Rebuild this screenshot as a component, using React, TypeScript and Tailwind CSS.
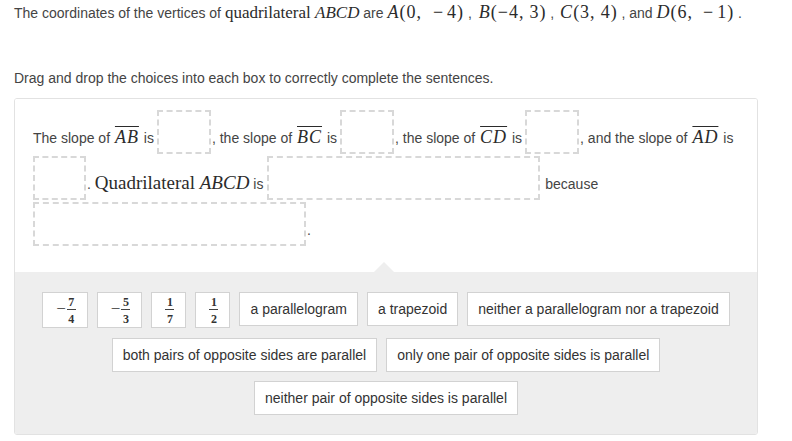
import React from "react";

const sans = "font-['Liberation_Sans',Arial,sans-serif]";

function M({ children, cls = "text-[17px]" }: { children: React.ReactNode; cls?: string }) {
  return (
    <span className={`font-['Liberation_Serif','Times_New_Roman',serif] leading-none text-[#2b2b2b] ${cls}`}>
      {children}
    </span>
  );
}

function Sp({ w }: { w: string }) {
  return <span className={`inline-block ${w}`} />;
}

function Seg({ children }: { children: React.ReactNode }) {
  return <span className="overline decoration-1 italic px-[1px] tracking-[1px]">{children}</span>;
}

function T({ children }: { children: React.ReactNode }) {
  return <span className="whitespace-pre leading-[20px] pb-[6px] text-[14px] text-[#444]">{children}</span>;
}

function Box({ w }: { w: string }) {
  return <span className={`${w} inline-block h-[44px] shrink-0 border-2 border-dashed border-[#d8d8d8] ml-[3px] mr-[1px]`} />;
}

function Chip({ children }: { children: React.ReactNode }) {
  return (
    <div className="border border-[#d2d2d2] bg-white px-[10px] py-[6px] leading-[20px] text-[14px] text-[#333] whitespace-nowrap">
      {children}
    </div>
  );
}

function Frac({ n, d, neg }: { n: string; d: string; neg?: boolean }) {
  return (
    <div className="flex h-[36px] items-center border border-[#d2d2d2] bg-white pl-[13px] pr-[11px] font-['Liberation_Serif',serif] text-[#333]">
      {neg && <span className="mr-[1px] text-[17px] leading-[16px] translate-y-[-1px]">−</span>}
      <span className="inline-flex flex-col items-center">
        <span className="text-[12px] font-bold leading-[12px]">{n}</span>
        <span className="mt-[1px] mb-[3px] h-px w-[9px] bg-[#444]" />
        <span className="text-[12px] font-bold leading-[12px]">{d}</span>
      </span>
    </div>
  );
}

const C = "text-[18px] tracking-[1px]";

export default function App() {
  return (
    <div className={`${sans} relative h-[441px] w-[792px] overflow-hidden bg-white text-[14px] text-[#444]`}>
      <div className="h-[68px] pl-[14px] pt-[3px] leading-[20px] whitespace-pre">
        <span>The coordinates of the vertices of </span>
        <M>
          quadrilateral <i>ABCD</i>
        </M>
        <span> are </span>
        <M cls={C}>
          <i>A</i>(0,<Sp w="w-[11px]" />−<Sp w="w-[3px]" />4)
        </M>
        <span> , </span>
        <Sp w="w-[3px]" />
        <M cls={C}>
          <i>B</i>(−4,<Sp w="w-[5px]" />3)
        </M>
        <span> , </span>
        <Sp w="w-[2px]" />
        <M cls={C}>
          <i>C</i>(3,<Sp w="w-[5px]" />4)
        </M>
        <span> , and </span>
        <M cls={C}>
          <i>D</i>(6,<Sp w="w-[10px]" />−<Sp w="w-[3px]" />1)
        </M>
        <span> .</span>
      </div>
      <div className="h-[30px] pl-[14px] leading-[20px]">
        Drag and drop the choices into each box to correctly complete the sentences.
      </div>

      <div className="ml-[14px] w-[744px] overflow-hidden rounded-[3px] border border-[#e2e2e2]">
        <div className="flex flex-col gap-[2px] bg-white pb-[26px] pl-[18px] pt-[11px]">
          <div className="flex h-[44px] items-end">
            <T>
              The slope of <M cls="text-[18px]"><Seg>AB</Seg></M> is
            </T>
            <Box w="w-[54px]" />
            <T>
              , the slope of <M cls="text-[18px]"><Seg>BC</Seg></M> is
            </T>
            <Box w="w-[54px]" />
            <T>
              , the slope of <M cls="text-[18px]"><Seg>CD</Seg></M> is
            </T>
            <Box w="w-[54px]" />
            <T>
              , and the slope of <M cls="text-[18px]"><Seg>AD</Seg></M> is
            </T>
          </div>
          <div className="flex h-[44px] items-end">
            <Box w="w-[53px] !ml-0" />
            <T>
              . <M cls="text-[19px]">Quadrilateral <i>ABCD</i></M> is
            </T>
            <Box w="w-[273px] !ml-[4px]" />
            <T> because</T>
          </div>
          <div className="flex h-[44px] items-end">
            <Box w="w-[273px] !ml-0" />
            <T>.</T>
          </div>
        </div>

        <div className="relative bg-[#eeeeee] pb-[19px] pt-[20px]">
          <div className="absolute left-[359px] top-[-10px] h-0 w-0 border-b-[10px] border-l-[10px] border-r-[10px] border-b-[#eeeeee] border-l-transparent border-r-transparent" />
          <div className="flex flex-col items-center">
            <div className="flex items-start gap-[9px]">
              <Frac n="7" d="4" neg />
              <Frac n="5" d="3" neg />
              <Frac n="1" d="7" />
              <Frac n="1" d="2" />
              <Chip>a parallelogram</Chip>
              <Chip>a trapezoid</Chip>
              <Chip>neither a parallelogram nor a trapezoid</Chip>
            </div>
            <div className="mt-[10px] flex items-start gap-[9px]">
              <Chip>both pairs of opposite sides are parallel</Chip>
              <Chip>only one pair of opposite sides is parallel</Chip>
            </div>
            <div className="mt-[9px] flex items-start gap-[9px]">
              <Chip>neither pair of opposite sides is parallel</Chip>
            </div>
          </div>
        </div>
      </div>
    </div>
  );
}
